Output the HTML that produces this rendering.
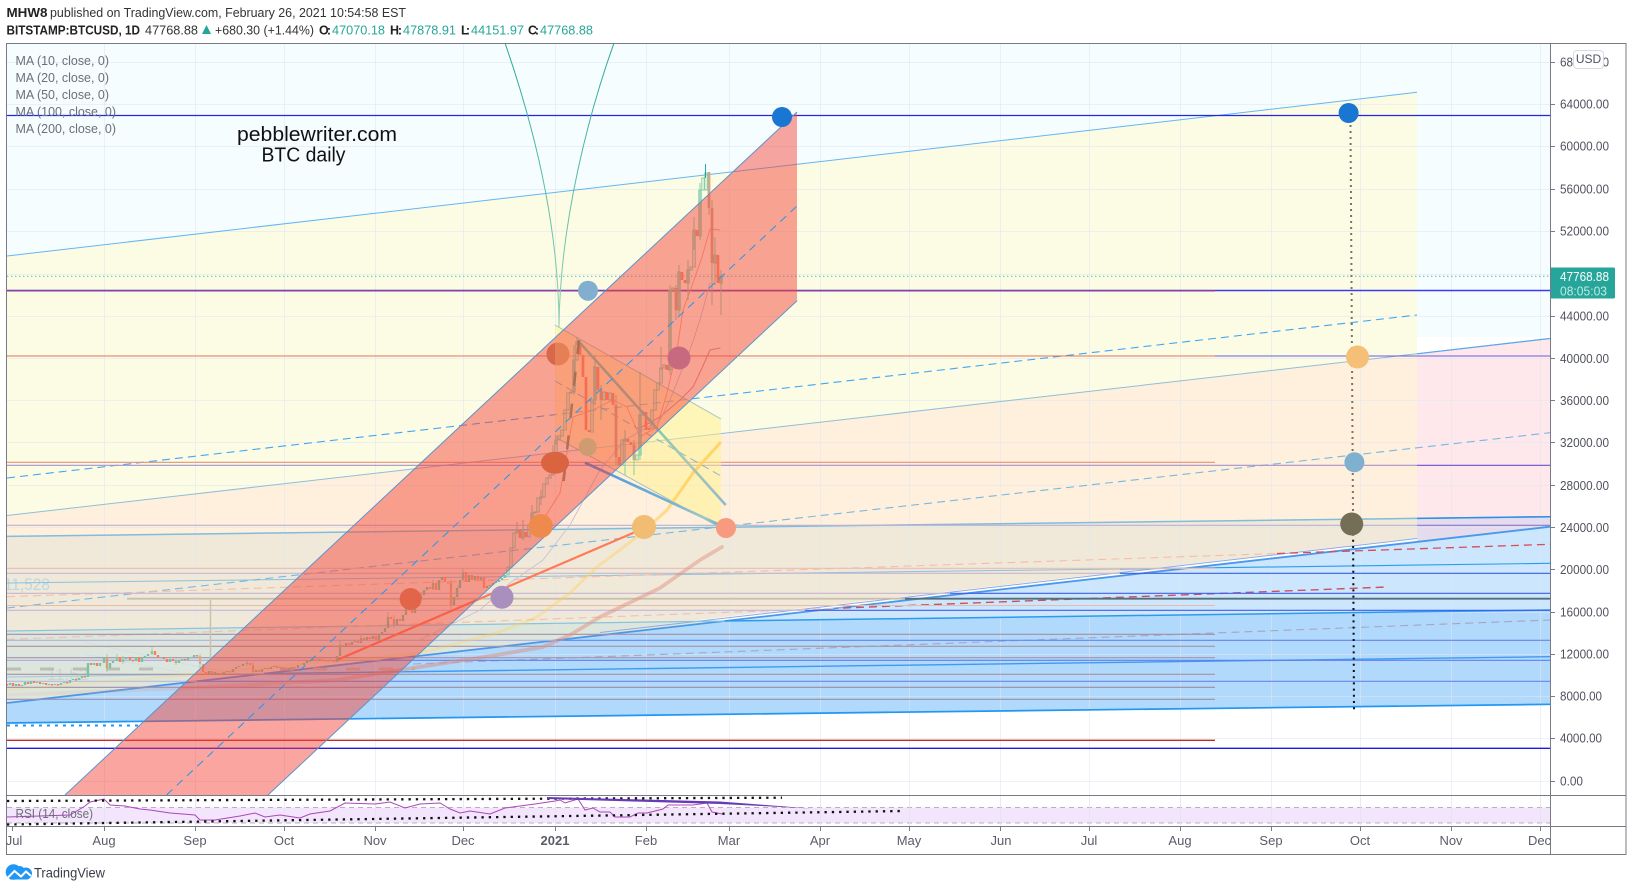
<!DOCTYPE html>
<html><head><meta charset="utf-8"><title>BTCUSD</title>
<style>
html,body{margin:0;padding:0;background:#fff;width:1633px;height:891px;overflow:hidden}
svg{display:block;filter:blur(.3px)}
text{font-family:"Liberation Sans",sans-serif}
</style></head><body>
<svg width="1633" height="891" viewBox="0 0 1633 891" xmlns="http://www.w3.org/2000/svg">
<defs>
<clipPath id="main"><rect x="7" y="44" width="1543" height="751.5"/></clipPath>
<clipPath id="rsi"><rect x="7" y="796" width="1543" height="30"/></clipPath>
<linearGradient id="g1" gradientUnits="userSpaceOnUse" x1="579" y1="341.700" x2="725.700" y2="505"><stop offset="0" stop-color="#7bccb5"/><stop offset=".5" stop-color="#7fc8b4"/><stop offset=".75" stop-color="#a8c8b4"/><stop offset="1" stop-color="#8bbacb"/></linearGradient>
<linearGradient id="g2" gradientUnits="userSpaceOnUse" x1="585" y1="462.700" x2="725.700" y2="527.700"><stop offset="0" stop-color="#2a90e0"/><stop offset=".2" stop-color="#5a9fd8"/><stop offset=".6" stop-color="#78b0d0"/><stop offset=".85" stop-color="#a0c8c4"/><stop offset="1" stop-color="#5a9fd8"/></linearGradient>
<linearGradient id="arc" x1="0" y1="0" x2="0" y2="1"><stop offset="0" stop-color="#26a69a"/><stop offset="1" stop-color="#8fd0b0"/></linearGradient>
<linearGradient id="gy" gradientUnits="userSpaceOnUse" x1="7" y1="0" x2="720" y2="0"><stop offset="0" stop-color="#ffcf5a" stop-opacity=".15"/><stop offset=".7" stop-color="#ffcf5a" stop-opacity=".33"/><stop offset=".88" stop-color="#ffcf5a" stop-opacity=".45"/><stop offset=".95" stop-color="#ffcf5a" stop-opacity=".8"/><stop offset="1" stop-color="#ffcf5a" stop-opacity=".85"/></linearGradient>
<linearGradient id="gs" gradientUnits="userSpaceOnUse" x1="7" y1="0" x2="720" y2="0"><stop offset="0" stop-color="#e09682" stop-opacity=".1"/><stop offset=".25" stop-color="#e09682" stop-opacity=".25"/><stop offset=".55" stop-color="#d88a80" stop-opacity=".5"/><stop offset="1" stop-color="#e09682" stop-opacity=".5"/></linearGradient>
</defs>
<rect width="1633" height="891" fill="#fff"/>

<!-- header -->
<text x="6.500" y="17" font-size="12.500" fill="#222" font-weight="bold" textLength="41" lengthAdjust="spacingAndGlyphs">MHW8</text>
<text x="50" y="17" font-size="12.500" fill="#333" textLength="356" lengthAdjust="spacingAndGlyphs">published on TradingView.com, February 26, 2021 10:54:58 EST</text>
<text x="6.500" y="34.500" font-size="12.500" fill="#222" font-weight="bold" textLength="133.500" lengthAdjust="spacingAndGlyphs">BITSTAMP:BTCUSD, 1D</text>
<text x="145" y="34.500" font-size="12.500" fill="#333" textLength="53" lengthAdjust="spacingAndGlyphs">47768.88</text>
<path d="M202 34L206.500 25L211 34z" fill="#26a69a"/>
<text x="215" y="34.500" font-size="12.500" fill="#333" textLength="99" lengthAdjust="spacingAndGlyphs">+680.30 (+1.44%)</text>
<text x="319" y="34.500" font-size="12.500" fill="#222" font-weight="bold" textLength="12">O:</text>
<text x="332" y="34.500" font-size="12.500" fill="#26a69a" textLength="53" lengthAdjust="spacingAndGlyphs">47070.18</text>
<text x="390" y="34.500" font-size="12.500" fill="#222" font-weight="bold" textLength="12">H:</text>
<text x="403" y="34.500" font-size="12.500" fill="#26a69a" textLength="53" lengthAdjust="spacingAndGlyphs">47878.91</text>
<text x="461" y="34.500" font-size="12.500" fill="#222" font-weight="bold" textLength="9">L:</text>
<text x="471" y="34.500" font-size="12.500" fill="#26a69a" textLength="53" lengthAdjust="spacingAndGlyphs">44151.97</text>
<text x="528" y="34.500" font-size="12.500" fill="#222" font-weight="bold" textLength="11">C:</text>
<text x="540" y="34.500" font-size="12.500" fill="#26a69a" textLength="53" lengthAdjust="spacingAndGlyphs">47768.88</text>

<g clip-path="url(#main)">
<!-- fills -->
<rect x="7" y="44" width="1543" height="293" fill="#f5fdff"/>
<polygon points="7,256 1417,92.3 1417,353.8 7,515.5" fill="#fcfce4"/>
<polygon points="7,515.5 1417,353.8 1417,518.4 7,536.4" fill="#fef0dd"/>
<polygon points="1417,353.8 1550,338.5 1550,516.7 1417,518.4" fill="#ffe8ec"/>
<polygon points="7,536.4 1417,518.4 1417,538 7,699" fill="#f0e9da"/>
<polygon points="7,631 725,621 7,703" fill="#dde6dc"/>
<polygon points="1417,518.4 1550,516.7 1550,526.7 1417,541.700" fill="#e4dbec"/>
<polygon points="725,621 1417,541.700 1550,526.700 1550,610" fill="#cbe6fd"/>
<polygon points="7,703 725,621 1550,610 1550,704.300 7,723" fill="#b1d9fb"/>

<!-- grid -->
<g stroke="#dfe5f3" stroke-opacity=".55" stroke-width="1" fill="none">
<path d="M104.500 44V795M195.500 44V795M284.500 44V795M375.500 44V795M463.500 44V795M555.500 44V795M646.500 44V795M729.500 44V795M820.500 44V795M909.500 44V795M1000.500 44V795M1089.500 44V795M1180.500 44V795M1271.500 44V795M1360.500 44V795M1451.500 44V795M1540.500 44V795"/>
<path d="M7 62.500H1550M7 104.500H1550M7 146.500H1550M7 189.500H1550M7 231.500H1550M7 274.500H1550M7 316.500H1550M7 358.500H1550M7 400.500H1550M7 442.500H1550M7 485.500H1550M7 527.500H1550M7 569.500H1550M7 612.500H1550M7 654.500H1550M7 696.500H1550M7 738.500H1550M7 781.500H1550"/>
</g>

<!-- faint labels -->
<text x="4" y="590" font-size="17" fill="#bcd6e4" textLength="46" lengthAdjust="spacingAndGlyphs">11,528</text>
<text x="47" y="680" font-size="17" fill="#c8d8d0">11,52</text>
<path d="M84 642L190 665L330 690M84 654L180 672" stroke="#cfe0e4" stroke-width="1" fill="none"/>

<!-- slanted blue boundaries -->
<g fill="none">
<path d="M7 256L1417 92.300" stroke="#64b5f6" stroke-width="1"/>
<path d="M7 515.500L1550 338.500" stroke="#8fbfd8" stroke-width="1"/>
<path d="M1417 353.800L1550 338.500" stroke="#5aa6ee" stroke-width="1.200"/>
<path d="M7 536.400L1550 516.700" stroke="#80bcdb" stroke-width="1.500"/>
<path d="M1417 518.400L1550 516.700" stroke="#2f8fe8" stroke-width="1.500"/>
<path d="M7 703L1550 526.700" stroke="#4a98ea" stroke-width="1.800"/>
<path d="M600 632.500L1417 538.500" stroke="#8fa8e4" stroke-width="1"/>
<path d="M7 723L1550 704.300" stroke="#2196f3" stroke-width="1.700"/>
<path d="M7 583L1120 569" stroke="#8cc2de" stroke-width="1"/>
<path d="M1120 569L1550 563.300" stroke="#2a9bf0" stroke-width="1.100"/>
<path d="M7 631L725 621" stroke="#8ac4dc" stroke-width="1.200"/>
<path d="M725 621L1550 610" stroke="#2b9bf0" stroke-width="1.500"/>
<path d="M7 677L264 673.600" stroke="#a8cfd8" stroke-width="1.200"/>
<path d="M264 673.600L1550 656.700" stroke="#3f9af0" stroke-width="1.400"/>
<!-- dashed -->
<path d="M7 478L1417 315" stroke="#42a5f5" stroke-width="1.100" stroke-dasharray="8 5"/>
<path d="M7 608L1550 432.700" stroke="#78b8e0" stroke-width="1.100" stroke-dasharray="8 5"/>
<path d="M7 596.700L1277 553.500" stroke="#f6bda6" stroke-width="1.100" stroke-dasharray="8 5"/>
<path d="M1277 553.500L1550 544.300" stroke="#d94c58" stroke-width="1.300" stroke-dasharray="8 5"/>
<path d="M7 639.400L843 608" stroke="#eec0ac" stroke-width="1.100" stroke-dasharray="8 5"/>
<path d="M843 608L1387 587" stroke="#cc5060" stroke-width="1.400" stroke-dasharray="8 5"/>
<path d="M413 664L1550 620" stroke="#a8a4c4" stroke-width="1.100" stroke-dasharray="8 5"/>
<path d="M7 669H155M280 669H415" stroke="#bdbdb5" stroke-width="3" stroke-dasharray="14 19"/>
</g>

<!-- horizontal levels -->
<g fill="none" stroke-width="1.100">
<path d="M7 115.500H1550" stroke="#2424e6" stroke-width="1.300"/>
<path d="M7 290.500H1550" stroke="#3a3af0" stroke-width="1.500"/>
<path d="M7 291.300H1215" stroke="#e57373" stroke-width="1"/>
<path d="M1215 356H1550" stroke="#6a5be0"/>
<path d="M7 356H1215" stroke="#e57058"/>
<path d="M7 462.300H1215" stroke="#e8907a"/>
<path d="M7 465.300H1417" stroke="#a693c8"/>
<path d="M1417 465.300H1550" stroke="#6a4fd8"/>
<path d="M7 525.300H1417" stroke="#bfb0cc"/>
<path d="M1417 525.300H1550" stroke="#8878d0"/>
<path d="M7 568.300H1215" stroke="#eebda8"/>
<path d="M7 573.300H1120" stroke="#c8b8cc"/>
<path d="M1120 573.300H1550" stroke="#3a60e0"/>
<path d="M7 593.300H950" stroke="#c4b6d0"/>
<path d="M950 593.300H1550" stroke="#3f5fe8"/>
<path d="M127 598.700H905" stroke="#c8c0ac" stroke-width="1.800"/>
<path d="M905 598.700H1550" stroke="#546e7a" stroke-width="1.800"/>
<path d="M7 605.500H1215" stroke="#e6bca8"/>
<path d="M7 610.300H805" stroke="#c4b6dc"/>
<path d="M805 610.300H1550" stroke="#3f5ff0"/>
<path d="M7 634.300H1215" stroke="#a68ea8"/>
<path d="M7 640.300H556" stroke="#b0b0e0"/>
<path d="M556 640.300H1550" stroke="#6a84ee"/>
<path d="M7 646.300H1215" stroke="#a892a8"/>
<path d="M7 657.700H1215" stroke="#a892a8"/>
<path d="M7 660.300H381" stroke="#a8a8e4"/>
<path d="M381 660.300H1550" stroke="#5f7ff0"/>
<path d="M7 674.300H1215" stroke="#a892a8"/>
<path d="M7 681.300H197" stroke="#b8b8e0"/>
<path d="M197 681.300H1550" stroke="#6d86e8"/>
<path d="M7 687.300H1215" stroke="#a08aa8"/>
<path d="M7 699.300H1215" stroke="#9a8eb0"/>
<path d="M7 740.300H1215" stroke="#c62828" stroke-width="1.300"/>
<path d="M7 748.300H1550" stroke="#1a1ae8" stroke-width="1.300"/>
<path d="M210.500 600V660" stroke="#c9c2ae" stroke-width="1.500"/>
<path d="M7 276.300H1550" stroke="#26a69a" stroke-width="1" stroke-dasharray="1.500 2.500" stroke-opacity=".75"/>
<path d="M7 725.500H140" stroke="#2196f3" stroke-width="2" stroke-dasharray="3 5"/>
</g>

<!-- wedge (beneath channel) -->
<polygon points="555,325 721,419 721,528 555,437" fill="#fff08c" fill-opacity=".5"/>
<path d="M555 325L721 419M555 437L721 528" stroke="#8fbcbc" stroke-opacity=".85" stroke-width="1" fill="none"/>
<path d="M555 381L721 476" stroke="#5f9fd0" stroke-opacity=".7" stroke-width="1" stroke-dasharray="8 5" fill="none"/>

<!-- MA curves -->
<g fill="none" stroke-linecap="round" stroke-linejoin="round">
<polyline points="7,690 191,675 306,663 383,657 420,653 497,633 537,617 570,593 597,567 637,537 667,510 693,473 720,443" stroke="url(#gy)" stroke-width="3"/>
<polyline points="7,695 187,688 337,680 413,668 497,655 543,647 570,635 600,617 660,588 700,560 722,547" stroke="url(#gs)" stroke-width="3.800"/>
<path d="M337 660L633 533" stroke="#ff7a55" stroke-width="2.200"/>
<polyline points="720,230 710,229 702,257 693,283 683,310 677,350 667,393 657,427 640,437 627,407 613,400 593,410 573,417 560,493 543,520" stroke="#ffa080" stroke-width=".9"/>
<polyline points="720,348 710,350 702,368 693,387 680,400 660,417 640,428" stroke="#d89098" stroke-width="1"/>
<polyline points="710,283 700,320 690,350 683,367 670,400 660,420 650,426 625,440 600,470 570,525 543,560 510,583 480,610 440,630 420,640" stroke="#c8c0d0" stroke-width=".9"/>
</g>

<!-- candles: flat part -->
<path d="M10 685V683M16 686V684M22 686V685M25 685V682M31 684V681M37 683V682M43 684V683M49 685V684M55 685V684M61 685V683M64 683V682M70 683V680M73 680V679M79 680V678M82 678V676M88 677V663M94 665V663M100 666V663M104 663V657M110 668V663M113 663V661M117 661V657M123 662V659M126 659V657M136 661V657M142 662V658M145 658V656M148 656V654M152 654V651M161 658V657M170 662V659M179 663V660M182 660V659M188 660V658M191 658V657M194 657V655M209 675V671M215 674V672M218 675V673M224 674V672M227 672V671M233 672V669M236 669V667M239 667V666M243 666V664M247 664V663M256 672V670M262 672V669M265 669V668M271 669V667M274 667V666M280 668V667M289 670V668M292 668V667M298 668V665M304 665V663M307 663V660M313 661V659M319 660V659M325 661V660M331 661V660M337 662V656M340 656V645M346 646V643M352 645V642M355 642V641M361 643V638M367 640V637M373 639V636M379 640V635M382 635V632M385 632V628M388 628V617M397 625V619M403 621V615M406 615V608M415 613V606M418 606V598M421 598V595M424 595V590M427 590V587M433 589V583M439 590V580M442 580V577M454 605V597M457 597V588M460 588V580M463 580V572M469 582V575M475 580V576M481 580V577M487 588V586M490 586V585M493 585V583M496 583V582M499 582V580M502 580V578M505 578V575" fill="none" stroke="#72c7a0" stroke-width="2.300"/>
<path d="M7 684V685.500M13 683V686M19 684V686M28 682V684M34 681V683M40 682V684M46 683V685M52 684V685.500M58 684V685.500M67 682V683.500M76 679V680.500M85 676V677.500M91 663V665M97 663V666M107 657V668M120 657V662M130 657V660M133 660V661.500M139 657V662M155 651V655M158 655V658M164 657V659M167 659V662M173 659V661M176 661V663M185 659V660.500M197 655V656.500" fill="none" stroke="#ff7a5c" stroke-width="2.300"/>
<path d="M200 656V664M203 664V672M206 672V675M212 671V674M221 673V674.500M230 671V672.500M250 663V665M253 665V672M259 670V672M268 668V669.500M277 666V668M283 667V669M286 669V670.500M295 667V668.500M310 660V661.500M316 659V660.500M322 659V661M328 660V661.500M334 660V662M343 645V646.500M349 643V645M358 641V643M364 638V640M370 637V639M376 636V640M391 617V619M394 619V625M400 619V621M409 608V610M412 610V613M430 587V589M436 583V590M445 577V582M448 582V583.500M451 583V605M466 572V582M472 575V580M478 576V580M484 577V588" fill="none" stroke="#ff9a78" stroke-width="2.300"/>
<path d="M107 654V672M117 654V660M123 656V664M152 647V655M176 658V665M200 654V668M247 660V666M253 662V674M340 640V650M361 634V642M388 612V622M394 615V628M406 604V612M421 592V600M433 580V590M451 580V610M458 585V600M463 568V580" fill="none" stroke="#a8c8a0" stroke-width=".9"/>

<!-- candles: bull -->
<path d="M506.800 575h2.400V567h-2.400zM509.800 567h2.400V548h-2.400zM512.800 548h2.400V533h-2.400zM515.800 533h2.400V530h-2.400zM521.800 538h2.400V532h-2.400zM527.800 537h2.400V525h-2.400zM530.800 525h2.400V513h-2.400zM533.800 513h2.400V512h-2.400zM536.800 512h2.400V498h-2.400zM539.800 498h2.400V497h-2.400zM542.800 497h2.400V484h-2.400zM545.800 484h2.400V478h-2.400zM548.800 478h2.400V475h-2.400zM551.800 475h2.400V458h-2.400zM554.800 458h2.400V440h-2.400zM557.800 440h2.400V436h-2.400zM560.800 436h2.400V430h-2.400zM563.800 430h2.400V410h-2.400zM566.800 410h2.400V393h-2.400zM569.800 393h2.400V392h-2.400zM572.800 392h2.400V360h-2.400zM575.800 360h2.400V342h-2.400zM590.800 432h2.400V400h-2.400zM593.800 400h2.400V367h-2.400zM602.800 400h2.400V392h-2.400zM608.800 400h2.400V393h-2.400zM620.800 465h2.400V440h-2.400zM623.800 441h2.400V439h-2.400zM635.800 460h2.400V455h-2.400zM638.800 455h2.400V415h-2.400zM641.800 415h2.400V412h-2.400zM650.800 428h2.400V410h-2.400zM653.800 410h2.400V390h-2.400zM656.800 390h2.400V383h-2.400zM659.800 383h2.400V368h-2.400zM662.800 368h2.400V365h-2.400zM668.800 370h2.400V290h-2.400zM671.800 290h2.400V288h-2.400zM677.800 310h2.400V272h-2.400zM686.800 283h2.400V270h-2.400zM689.800 270h2.400V267h-2.400zM692.800 267h2.400V230h-2.400zM698.800 236h2.400V190h-2.400zM701.800 190h2.400V178h-2.400zM704.800 190h2.400V173h-2.400zM713.800 263h2.400V255h-2.400zM719.800 283h2.400V276h-2.400z" fill="none" stroke="#7fd0ac" stroke-width="1"/>
<!-- candles: bear -->
<path d="M520 530V538M526 532V537M580 342V355M583 355V377M586 377V430M589 430V432M598 367V390M601 390V400M607 392V400M613 393V405M616 405V457M619 457V465M628 439V442M631 442V445M634 445V460M646 412V430M649 430V428M667 365V370M676 288V310M682 272V280M685 280V283M697 230V236M709 172V208M712 208V263M718 255V283" fill="none" stroke="#fd9270" stroke-width="2.700"/>
<!-- wicks -->
<path d="M541 490V505M517 522V533M523 520V540M532 505V527M553 445V460M556 435V445M574 345V395M577 337V345M595 355V405M601 385V420M616 395V465M625 430V475M634 440V475M640 372V460M661 347V370M670 285V375M676 285V320M679 265V315M688 260V300M694 217V250M700 183V240M712 200V305M715 237V285M721 270V315M709 172V215" fill="none" stroke="#7fd0ac" stroke-width="1"/>
<path d="M705.500 164V178" stroke="#26a69a" stroke-width="1"/>

<!-- green arcs -->
<path d="M505 43C530 115 559 220 559 327M614 43C590 110 560 220 559 327" fill="none" stroke="url(#arc)" stroke-width="1"/>

<!-- thick wedge lines beneath channel -->
<path d="M579 341.700L725.700 505" stroke="url(#g1)" stroke-width="2.600" fill="none"/>
<path d="M585 462.700L725.700 527.700" stroke="url(#g2)" stroke-width="2.600" fill="none"/>

<!-- main channel -->
<polygon points="65,795 797,112 797,300.700 268,795" fill="#f44336" fill-opacity=".48"/>
<path d="M65 795L797 112M268 795L797 300.700" stroke="#5c93cf" stroke-width="1" fill="none"/>
<path d="M166.500 795L797 206" stroke="#2196f3" stroke-width="1" stroke-dasharray="8 6" fill="none"/>
<path d="M579 340L563 487" stroke="#a0664a" stroke-width="2.500" stroke-dasharray="14 18" fill="none" stroke-opacity=".8"/>

<!-- vertical dotted -->
<path d="M1350.500 125L1353 515" stroke="#77736a" stroke-width="2" stroke-dasharray="2 4" fill="none"/>
<path d="M1353 515L1354 712" stroke="#0a0a0a" stroke-width="2" stroke-dasharray="2 4.200" fill="none"/>

<!-- circles -->
<circle cx="782" cy="117" r="10" fill="#1976d2"/>
<circle cx="1348.600" cy="113" r="10" fill="#1976d2"/>
<circle cx="588" cy="290.700" r="10" fill="#82afcf"/>
<circle cx="558" cy="354" r="11.500" fill="#e58056"/>
<path d="M555 342.900A11.500 11.500 0 0 0 555 365.100z" fill="#d8684c"/>
<circle cx="679" cy="358" r="11.500" fill="#c76a80"/>
<circle cx="587.700" cy="447" r="9" fill="#cf9c72"/>
<ellipse cx="555" cy="462.700" rx="14" ry="11" fill="#da6340"/>
<circle cx="540.700" cy="526" r="12" fill="#ef8a4d"/>
<circle cx="644" cy="527" r="12" fill="#f0bd72"/>
<circle cx="726" cy="528" r="10" fill="#f79a80"/>
<circle cx="410.600" cy="599" r="11" fill="#e2654a"/>
<circle cx="502" cy="597.300" r="11.500" fill="#a98fbe"/>
<circle cx="1357.500" cy="357" r="11.500" fill="#f5bf78"/>
<circle cx="1354.400" cy="462.300" r="10" fill="#7fb0d0"/>
<circle cx="1351.700" cy="524" r="11.500" fill="#736e55"/>

<!-- legend -->
<g font-size="12.500" fill="#6d6f78">
<text x="15.500" y="65" textLength="93.500" lengthAdjust="spacingAndGlyphs">MA (10, close, 0)</text>
<text x="15.500" y="82" textLength="93.500" lengthAdjust="spacingAndGlyphs">MA (20, close, 0)</text>
<text x="15.500" y="99" textLength="93.500" lengthAdjust="spacingAndGlyphs">MA (50, close, 0)</text>
<text x="15.500" y="116" textLength="100.500" lengthAdjust="spacingAndGlyphs">MA (100, close, 0)</text>
<text x="15.500" y="133" textLength="100.500" lengthAdjust="spacingAndGlyphs">MA (200, close, 0)</text>
</g>
<text x="237" y="141" font-size="20" fill="#111" textLength="160" lengthAdjust="spacingAndGlyphs">pebblewriter.com</text>
<text x="261.500" y="161.500" font-size="20" fill="#111" textLength="84" lengthAdjust="spacingAndGlyphs">BTC daily</text>
</g>

<!-- RSI pane -->
<g clip-path="url(#rsi)">
<rect x="7" y="807.500" width="1543" height="15.500" fill="#f3e5fb"/>
<path d="M7 807.500H1550M7 823H1550" stroke="#b8b0c0" stroke-width="1" stroke-dasharray="5 4" fill="none"/>
<g stroke="#dfe2f0" stroke-opacity=".7"><path d="M104.500 796V826M195.500 796V826M284.500 796V826M375.500 796V826M463.500 796V826M555.500 796V826M646.500 796V826M729.500 796V826M820.500 796V826M909.500 796V826M1000.500 796V826M1089.500 796V826M1180.500 796V826M1271.500 796V826M1360.500 796V826M1451.500 796V826M1540.500 796V826"/></g>
<polyline points="7,817 40,816 70,815 85,806 90,802 104,799 110,805 125,806 140,809 150,810 170,813 195,815 200,820 215,820 240,816 255,813 265,817 280,815 300,818 310,814 330,811 345,803 375,804 390,802 405,808 420,804 440,803 450,809 460,813 470,811 490,814 505,808 520,806 535,804 555,801 560,800 565,803 578,799 585,810 593,808 600,812 610,812 615,817 630,817 638,813 647,813 663,809 668,805 693,805 707,803 712,812 722,814" fill="none" stroke="#ab47bc" stroke-width="1"/>
<path d="M7 801L782 797.700" stroke="#111" stroke-width="2.300" stroke-dasharray="2.300 5" fill="none"/>
<path d="M7 824.500L903 811" stroke="#111" stroke-width="2.300" stroke-dasharray="2.300 5" fill="none"/>
<polygon points="547,797 720,801.500 811,808.500 720,804 547,799" fill="#673ab7"/>
<text x="15.500" y="818" font-size="12.500" fill="#6d6f78" textLength="77.500" lengthAdjust="spacingAndGlyphs">RSI (14, close)</text>
</g>

<!-- price axis -->
<g font-size="13" fill="#50535e">
<text x="1560" y="66.500" textLength="49" lengthAdjust="spacingAndGlyphs">68000.00</text>
<text x="1560" y="108.500" textLength="49" lengthAdjust="spacingAndGlyphs">64000.00</text>
<text x="1560" y="150.500" textLength="49" lengthAdjust="spacingAndGlyphs">60000.00</text>
<text x="1560" y="193.500" textLength="49" lengthAdjust="spacingAndGlyphs">56000.00</text>
<text x="1560" y="235.500" textLength="49" lengthAdjust="spacingAndGlyphs">52000.00</text>
<text x="1560" y="320.500" textLength="49" lengthAdjust="spacingAndGlyphs">44000.00</text>
<text x="1560" y="363" textLength="49" lengthAdjust="spacingAndGlyphs">40000.00</text>
<text x="1560" y="405" textLength="49" lengthAdjust="spacingAndGlyphs">36000.00</text>
<text x="1560" y="447" textLength="49" lengthAdjust="spacingAndGlyphs">32000.00</text>
<text x="1560" y="490" textLength="49" lengthAdjust="spacingAndGlyphs">28000.00</text>
<text x="1560" y="532" textLength="49" lengthAdjust="spacingAndGlyphs">24000.00</text>
<text x="1560" y="574" textLength="49" lengthAdjust="spacingAndGlyphs">20000.00</text>
<text x="1560" y="616.500" textLength="49" lengthAdjust="spacingAndGlyphs">16000.00</text>
<text x="1560" y="658.500" textLength="49" lengthAdjust="spacingAndGlyphs">12000.00</text>
<text x="1560" y="700.500" textLength="42" lengthAdjust="spacingAndGlyphs">8000.00</text>
<text x="1560" y="742.500" textLength="42" lengthAdjust="spacingAndGlyphs">4000.00</text>
<text x="1560" y="785.500" textLength="23" lengthAdjust="spacingAndGlyphs">0.00</text>
</g>
<path d="M1551 62.500h4M1551 104.500h4M1551 146.500h4M1551 189.500h4M1551 231.500h4M1551 316.500h4M1551 358.500h4M1551 400.500h4M1551 442.500h4M1551 485.500h4M1551 527.500h4M1551 569.500h4M1551 612.500h4M1551 654.500h4M1551 696.500h4M1551 738.500h4M1551 781.500h4" stroke="#787b86" stroke-width="1"/>
<rect x="1573.500" y="50.500" width="30" height="18" rx="3.500" fill="#fff" stroke="#d8dae3"/>
<text x="1588.500" y="63" font-size="12" fill="#50535e" text-anchor="middle">USD</text>
<rect x="1550" y="267.500" width="65" height="31" rx="1.500" fill="#26a69a"/>
<text x="1560" y="281" font-size="13" fill="#fff" textLength="49" lengthAdjust="spacingAndGlyphs">47768.88</text>
<text x="1560" y="295.500" font-size="13" fill="#bfe8e0" textLength="47" lengthAdjust="spacingAndGlyphs">08:05:03</text>

<!-- frame -->
<g fill="none" stroke="#787b86" stroke-width="1">
<rect x="6.500" y="43.500" width="1619.500" height="811"/>
<path d="M1550.500 44V854M7 795.500H1626M7 826.500H1626"/>
<path d="M12.500 827V831M104.500 827V831M195.500 827V831M284.500 827V831M375.500 827V831M463.500 827V831M555.500 827V831M646.500 827V831M729.500 827V831M820.500 827V831M909.500 827V831M1000.500 827V831M1089.500 827V831M1180.500 827V831M1271.500 827V831M1360.500 827V831M1451.500 827V831M1540.500 827V831"/>
</g>

<!-- time axis -->
<g font-size="13" fill="#5a5d68" text-anchor="middle">
<text x="14" y="845">Jul</text>
<text x="104" y="845">Aug</text>
<text x="195" y="845">Sep</text>
<text x="284" y="845">Oct</text>
<text x="375" y="845">Nov</text>
<text x="463" y="845">Dec</text>
<text x="555" y="845" font-weight="bold">2021</text>
<text x="646" y="845">Feb</text>
<text x="729" y="845">Mar</text>
<text x="820" y="845">Apr</text>
<text x="909" y="845">May</text>
<text x="1001" y="845">Jun</text>
<text x="1089" y="845">Jul</text>
<text x="1180" y="845">Aug</text>
<text x="1271" y="845">Sep</text>
<text x="1360" y="845">Oct</text>
<text x="1451" y="845">Nov</text>
<text x="1539.500" y="845">Dec</text>
</g>

<!-- logo -->
<g fill="#2196f3"><circle cx="13.500" cy="872" r="7.800"/><circle cx="20" cy="870.500" r="4.500"/><circle cx="26" cy="873.500" r="6"/><rect x="10" y="874" width="18" height="5.500"/></g>
<path d="M8 877.500L14.500 871L21 876.500L26 871.500L31 876" fill="none" stroke="#fff" stroke-width="2"/>
<text x="34" y="877.500" font-size="14" fill="#3a3d46" textLength="71" lengthAdjust="spacingAndGlyphs">TradingView</text>
</svg>
</body></html>
